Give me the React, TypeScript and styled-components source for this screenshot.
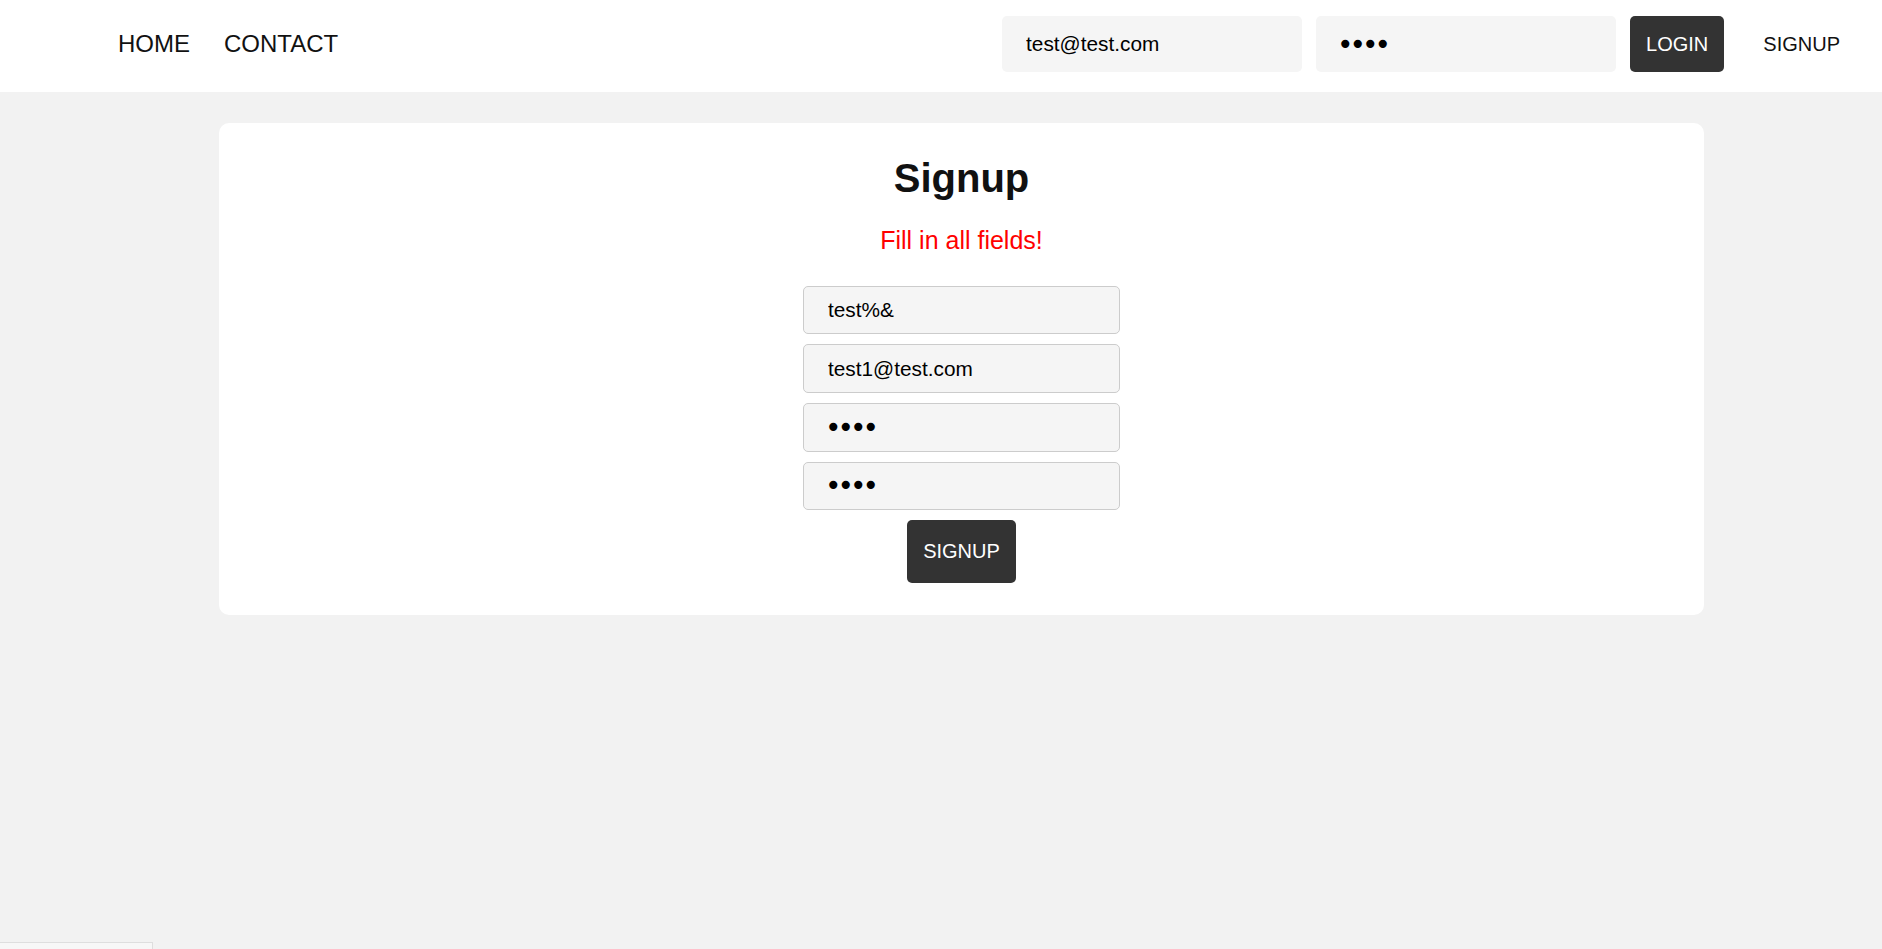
import React from "react";
import styled, { createGlobalStyle, css } from "styled-components";

const GlobalStyle = createGlobalStyle`
  html, body {
    margin: 0;
    padding: 0;
  }
  body {
    background: #f2f2f2;
    font-family: "Liberation Sans", Arial, sans-serif;
    color: #111;
    min-height: 100vh;
  }
  * { box-sizing: border-box; }
`;

const masked = css`
  font-family: "DejaVu Sans", sans-serif;
  font-size: 28px;
  letter-spacing: -4px;
  padding-left: 21px;
`;

const Header = styled.header`
  display: flex;
  align-items: center;
  justify-content: space-between;
  background: #ffffff;
  padding: 16px 42px 20px 118px;
`;

const Nav = styled.nav`
  display: flex;
  align-items: center;
  gap: 34px;
`;

const NavLink = styled.a`
  font-size: 24px;
  color: #111;
  text-decoration: none;
  line-height: 1;
`;

const LoginForm = styled.form`
  display: flex;
  align-items: center;
  gap: 14px;
  margin: 0;
`;

const HeaderInput = styled.input<{ $masked?: boolean }>`
  width: 300px;
  height: 56px;
  border: none;
  border-radius: 5px;
  background: #f5f5f5;
  padding: 0 24px;
  font-family: "Liberation Sans", Arial, sans-serif;
  font-size: 20.8px;
  color: #000;
  outline: none;
  ${(p) => p.$masked && masked}
`;

const DarkButton = styled.button<{ $height: number }>`
  height: ${(p) => p.$height}px;
  padding: 0 16px;
  border: none;
  border-radius: 5px;
  background: #333333;
  color: #ffffff;
  font-family: "Liberation Sans", Arial, sans-serif;
  font-size: 20px;
  cursor: pointer;
`;

const SignupLink = styled.a`
  margin-left: 25px;
  font-size: 20px;
  color: #111;
  text-decoration: none;
`;

const Main = styled.main`
  padding: 31px 178px 0 219px;
`;

const Card = styled.section`
  background: #ffffff;
  border-radius: 10px;
  padding: 33px 20px 32px;
  display: flex;
  flex-direction: column;
  align-items: center;
`;

const Title = styled.h1`
  margin: 0;
  font-size: 40px;
  font-weight: 700;
  line-height: normal;
  color: #111;
`;

const ErrorText = styled.p`
  margin: 24.5px 0 0;
  font-size: 25px;
  line-height: normal;
  color: #ff0000;
`;

const SignupForm = styled.form`
  margin-top: 31px;
  display: flex;
  flex-direction: column;
  align-items: center;
  gap: 10px;
`;

const FormInput = styled.input<{ $masked?: boolean }>`
  width: 317px;
  height: 48.7px;
  border: 1px solid #cccccc;
  border-radius: 5px;
  background: #f5f5f5;
  padding: 0 24px;
  font-family: "Liberation Sans", Arial, sans-serif;
  font-size: 20.8px;
  color: #000;
  outline: none;
  ${(p) => p.$masked && masked}
`;

const Badge = styled.div`
  position: fixed;
  left: 0;
  top: 942px;
  width: 153px;
  height: 60px;
  background: #f7f7f7;
  border: 1px solid #dedede;
  border-left: none;
`;

export default function App() {
  return (
    <>
      <GlobalStyle />
      <Header>
        <Nav>
          <NavLink href="#">HOME</NavLink>
          <NavLink href="#">CONTACT</NavLink>
        </Nav>
        <LoginForm onSubmit={(e) => e.preventDefault()}>
          <HeaderInput type="email" defaultValue="test@test.com" />
          <HeaderInput $masked type="password" defaultValue="test" />
          <DarkButton $height={56} type="submit">LOGIN</DarkButton>
          <SignupLink href="#">SIGNUP</SignupLink>
        </LoginForm>
      </Header>
      <Main>
        <Card>
          <Title>Signup</Title>
          <ErrorText>Fill in all fields!</ErrorText>
          <SignupForm onSubmit={(e) => e.preventDefault()}>
            <FormInput type="text" defaultValue="test%&" />
            <FormInput type="email" defaultValue="test1@test.com" />
            <FormInput $masked type="password" defaultValue="test" />
            <FormInput $masked type="password" defaultValue="test" />
            <DarkButton $height={63} type="submit">SIGNUP</DarkButton>
          </SignupForm>
        </Card>
      </Main>
      <Badge />
    </>
  );
}
